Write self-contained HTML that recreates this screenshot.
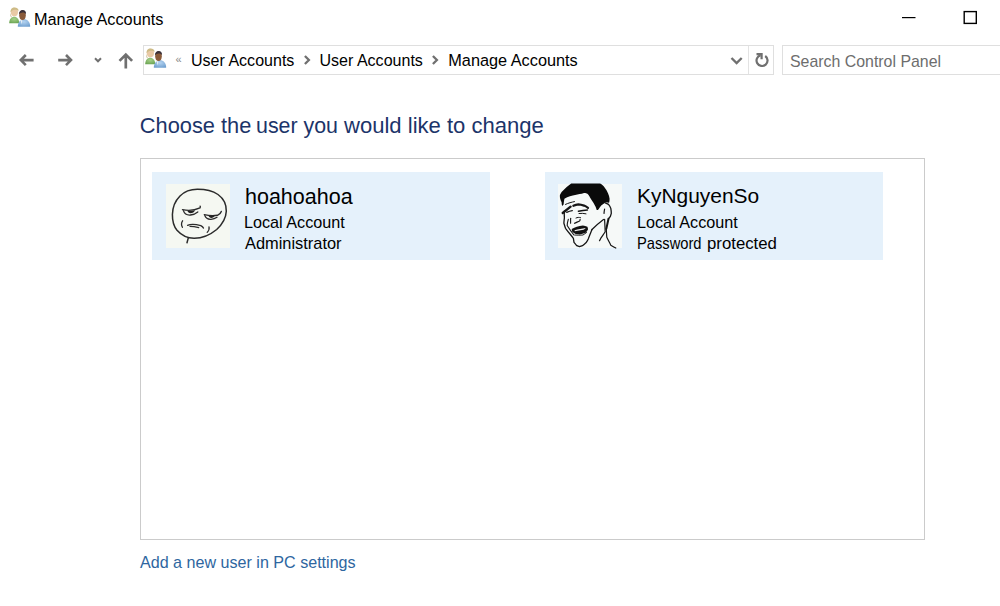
<!DOCTYPE html>
<html><head><meta charset="utf-8">
<style>
html,body{margin:0;padding:0;background:#fff;width:1000px;height:606px;overflow:hidden;position:relative;font-family:"Liberation Sans",sans-serif;}
.t{position:absolute;white-space:nowrap;line-height:1;transform-origin:0 0;}
.box{position:absolute;box-sizing:border-box;}
svg{position:absolute;overflow:visible;}
</style></head><body>

<!-- title bar -->
<svg style="left:6px;top:4px" width="26" height="26" viewBox="0 0 26 26">
  <defs>
    <radialGradient id="g1" cx="0.5" cy="0.35" r="0.7"><stop offset="0" stop-color="#a6d08a"/><stop offset="1" stop-color="#6ba452"/></radialGradient>
    <radialGradient id="b1" cx="0.5" cy="0.35" r="0.7"><stop offset="0" stop-color="#b4d3f0"/><stop offset="1" stop-color="#6f9fcf"/></radialGradient>
  </defs>
  <path d="M3.2 19.2 C3.2 15.2 5.5 12.8 8.2 12.8 C10.9 12.8 13.2 15 13.2 19.2 Z" fill="url(#g1)"/>
  <ellipse cx="8.4" cy="8" rx="3.6" ry="4.2" fill="#e9c9a5"/>
  <path d="M4.6 8.6 C4.3 5 6 3.4 8.5 3.4 C11 3.4 12.8 4.8 12.6 7 C11.5 5.8 10 5.6 8.5 5.8 C6.5 6 5.5 7 4.6 8.6Z" fill="#cdbb86"/>
  <path d="M4.8 9 C4.8 11 5.2 12.5 6 13.2 L5 13.3 C4.3 12 4.2 10.5 4.8 9Z" fill="#bfae80"/>
  <path d="M11.8 22.7 C11.8 18 14.6 15.2 18 15.2 C21.4 15.2 24.2 17.8 24.2 22.7 Z" fill="url(#b1)"/>
  <path d="M14.6 15.8 L15.6 20.5 L16.4 16.5Z" fill="#e8eef5"/>
  <ellipse cx="16.5" cy="11.3" rx="3.3" ry="4.7" fill="#8a5b3a"/>
  <path d="M13 10.5 C12.8 7.5 14.5 6 16.6 6 C18.8 6 20.2 7.3 20 10.2 C19.3 8.8 18 8.3 16.6 8.4 C15 8.5 13.8 9.2 13 10.5Z" fill="#3b3139"/>
</svg>
<div class="t" style="left:34px;top:10.6px;font-size:16.3px;color:#000">Manage Accounts</div>

<!-- address bar -->
<div class="box" style="left:143px;top:45px;width:631px;height:30px;border:1px solid #dfdfdf"></div>
<div class="box" style="left:748px;top:46px;width:1px;height:28px;background:#e3e3e3"></div>
<svg style="left:142px;top:45px" width="26" height="26" viewBox="0 0 26 26">
  <defs>
    <radialGradient id="g2" cx="0.5" cy="0.35" r="0.7"><stop offset="0" stop-color="#a6d08a"/><stop offset="1" stop-color="#6ba452"/></radialGradient>
    <radialGradient id="b2" cx="0.5" cy="0.35" r="0.7"><stop offset="0" stop-color="#b4d3f0"/><stop offset="1" stop-color="#6f9fcf"/></radialGradient>
  </defs>
  <path d="M3.2 19.2 C3.2 15.2 5.5 12.8 8.2 12.8 C10.9 12.8 13.2 15 13.2 19.2 Z" fill="url(#g2)"/>
  <ellipse cx="8.4" cy="8" rx="3.6" ry="4.2" fill="#e9c9a5"/>
  <path d="M4.6 8.6 C4.3 5 6 3.4 8.5 3.4 C11 3.4 12.8 4.8 12.6 7 C11.5 5.8 10 5.6 8.5 5.8 C6.5 6 5.5 7 4.6 8.6Z" fill="#cdbb86"/>
  <path d="M4.8 9 C4.8 11 5.2 12.5 6 13.2 L5 13.3 C4.3 12 4.2 10.5 4.8 9Z" fill="#bfae80"/>
  <path d="M11.8 22.7 C11.8 18 14.6 15.2 18 15.2 C21.4 15.2 24.2 17.8 24.2 22.7 Z" fill="url(#b2)"/>
  <path d="M14.6 15.8 L15.6 20.5 L16.4 16.5Z" fill="#e8eef5"/>
  <ellipse cx="16.5" cy="11.3" rx="3.3" ry="4.7" fill="#8a5b3a"/>
  <path d="M13 10.5 C12.8 7.5 14.5 6 16.6 6 C18.8 6 20.2 7.3 20 10.2 C19.3 8.8 18 8.3 16.6 8.4 C15 8.5 13.8 9.2 13 10.5Z" fill="#3b3139"/>
</svg>
<div class="t" style="left:175.5px;top:53.5px;font-size:11px;color:#888">«</div>
<div class="t" style="left:191px;top:51.6px;font-size:16.05px;color:#000">User Accounts</div>
<div class="t" style="left:319.5px;top:51.6px;font-size:16.05px;color:#000">User Accounts</div>
<div class="t" style="left:448.3px;top:51.6px;font-size:16.3px;color:#000">Manage Accounts</div>
<div class="box" style="left:782px;top:45px;width:230px;height:30px;border:1px solid #dfdfdf"></div>
<div class="t" style="left:790px;top:53.5px;font-size:15.9px;color:#6d6d6d">Search Control Panel</div>

<!-- heading -->
<div class="t" style="left:139.8px;top:115px;font-size:21.8px;color:#1c3469">Choose the</div><div class="t" style="left:256.2px;top:115px;font-size:21.8px;color:#1c3469;transform:scaleX(0.98);transform-origin:0 0">user you</div><div class="t" style="left:344.2px;top:115px;font-size:21.8px;color:#1c3469;transform:scaleX(1.012);transform-origin:0 0">would like to change</div>

<!-- panel -->
<div class="box" style="left:140px;top:158px;width:785px;height:382px;border:1px solid #cbcbcb"></div>

<!-- card 1 -->
<div class="box" style="left:152px;top:172px;width:338px;height:88px;background:#e5f1fb"></div>
<svg style="left:164px;top:182px" width="68" height="68" viewBox="0 0 68 68">
  <rect x="2" y="2" width="64" height="64" fill="#f5f8f2"/>
  <g fill="none" stroke="#2b2b2b" stroke-width="1.5" stroke-linecap="round">
    <path d="M33.7 7.3 C26 7.2 20.5 9.5 16 14 C11.5 18.5 8.6 25 8.4 32.5 C8.3 39 9.5 44 13 48.3 C17 52.8 23 56.3 30 56.3 C38 56.4 46 53 52.7 47.5 C58.5 42 62 36 62.3 29.2 C62.5 22 59.5 16.5 54 12.5 C48 8.5 41 7.3 33.7 7.3 Z"/>
    <path d="M24.3 55.9 L23 60.8"/>
    <path d="M18.5 27.6 C24 29 30 28.6 36 25.9 C36.3 25.3 36.4 24.7 36.2 24.2" stroke-width="1.4"/>
    <path d="M19.4 28.6 C20.5 32 23 33.3 26.5 33 C29.5 32.7 32 31.5 33.8 30" stroke-width="1.3"/>
    <path d="M40.3 32.6 C45 33.8 50 33.8 53.5 33.3 C55.5 32.5 56.8 31 57.3 29.5" stroke-width="1.4"/>
    <path d="M40.8 33.6 C41.8 36.3 44 37.5 47 37.3 C49.5 37.1 51.5 36.3 53 35.3" stroke-width="1.3"/>
    <path d="M18.6 38.8 C17.4 40.5 17.2 43 18.4 45.3" stroke-width="1.3"/>
    <path d="M23.6 43.3 C27 41.8 32 42.3 36.8 43.6 C38 44.2 39 45 39.4 46" stroke-width="1.4"/>
    <path d="M26 44.4 C29 44.5 32 45 34.8 45.6" stroke-width="1.1"/>
    <path d="M45 45 C45.5 47 44.6 49 43.2 50.4" stroke-width="1.3"/>
  </g>
  <path d="M23.5 29 C26 29.3 29 29 31 28.3 C30.5 30.3 28.5 31.3 26.5 31.3 C25 31.2 24 30.3 23.5 29Z" fill="#222"/>
  <path d="M44.5 33.7 C47 34 49.5 33.9 51 33.6 C50.3 35.2 48.8 35.9 47.3 35.9 C46 35.8 45 35 44.5 33.7Z" fill="#222"/>
</svg>
<div class="t" style="left:245px;top:186.5px;font-size:21.5px;color:#000">hoahoahoa</div>
<div class="t" style="left:244px;top:213.5px;font-size:16.2px;color:#000">Local Account</div>
<div class="t" style="left:245px;top:235px;font-size:16.4px;color:#000">Administrator</div>

<!-- card 2 -->
<div class="box" style="left:545px;top:172px;width:338px;height:88px;background:#e5f1fb"></div>
<svg style="left:556px;top:182px" width="68" height="68" viewBox="0 0 68 68">
  <rect x="2" y="2" width="64" height="64" fill="#f6f9f8"/>
  <path d="M15.2 1.5 L44.1 1.6 C46 2.5 47.5 4 48.6 5.6 C50 7.5 51.2 9.3 52 11.2 C52.8 13 53.4 15 53.6 16.8 C53.6 18.3 53.4 19.8 53.1 20.8 C52 20.6 50.8 20.3 49.7 20.2 C48 21.3 46.4 22.4 45.2 23.6 C44.2 25 43.2 26.4 42.4 27.5 C41.8 28 41.2 28.1 40.7 28 C40.3 26.8 40 25.8 39.6 24.7 C38.8 23.3 38.2 22 37.4 20.8 C36.3 19.3 35.2 17.6 34 15.5 C33 13.5 32 12 31.4 11.8 C30.5 11 29 10.8 28 10.9 C26.5 11.3 25 11.8 23.6 12.1 C21.5 12.6 19 13 16.8 13.5 C14.8 14 13 14.5 11.2 15.2 C10.2 15.8 9.2 16.3 8.4 16.8 C8 18.5 7.8 20.5 7.6 22.5 C7.2 22.8 6.6 23.5 6.2 24.1 C5.8 22.8 5.6 21.5 5.6 20.2 C5 19 4.5 17.8 4.2 16.8 C3.9 15.5 3.8 14.2 3.9 12.9 C4.4 12 5 11 5.6 10.1 C7.2 8.5 9 6.7 10.7 5 C12.2 3.7 13.7 2.5 15.2 1.5Z" fill="#0a0a0a"/>
  <g fill="none" stroke="#151515" stroke-linecap="round" stroke-linejoin="round">
    <path d="M6.7 31 L14.6 24.7" stroke-width="2.3"/>
    <path d="M17.4 23.8 C19 23 20.7 22.5 22.4 22.4 C24.3 22.5 26.2 23 28 23.6 C29.5 24.2 30.8 25 32 25.8" stroke-width="2.2"/>
    <path d="M9.5 22.4 C12.5 21 15.5 20.2 18.5 19.6" stroke-width="1"/>
    <path d="M10.7 30.3 C12.5 29.5 14.4 28.9 16.3 28.6" stroke-width="1.3"/>
    <path d="M22.4 29.2 C25.5 28.6 28.5 28.2 31.4 28" stroke-width="1.5"/>
    <path d="M23 31.5 C25.5 31.2 28 31.3 30 31.8" stroke-width="1"/>
    <path d="M8.4 29 C8.2 31.5 8.2 33.5 8.4 35.7 C8.2 37.7 7.9 39.5 7.9 41.3 C8.4 43 8.9 44.7 9.5 46.3 C11 48.3 12.5 50.2 14 52 C15.2 53.5 16.4 55 17.4 56.4 C17.6 57.8 17.8 59.1 18 60.4 C19 61.5 19.9 62.7 20.8 63.7 C21.7 64.1 22.7 64.4 23.6 64.6 C24.5 64.3 25.5 64 26.4 63.7 C27.8 62.7 29.1 61.5 30.3 60.4 C31.2 59.1 31.9 57.7 32.5 56.4 C33.5 53.5 34.8 50.5 36 47.5" stroke-width="1.3"/>
    <path d="M12.3 37.4 C11.7 39.4 11.2 41.4 11.2 43.5 C12.2 45.2 13.4 46.9 14.6 48.6 C15.7 50 16.8 51.5 18 53" stroke-width="1.1"/>
    <path d="M14.6 36.2 C14.6 38 14.6 39.6 14.6 41.3" stroke-width="1.1"/>
    <path d="M18.5 41.3 C20.2 40.5 21.9 39.8 23.6 39 C24 38.4 24.1 37.9 24.1 37.4" stroke-width="1.2"/>
    <path d="M20 36 C21.5 35.3 23 35.2 24.5 35.6" stroke-width="1"/>
    <path d="M36 47.5 C39.5 44 43.5 40.5 47.5 37.5" stroke-width="1.2"/>
    <path d="M49.2 20.8 C50.3 21.3 51.5 21.8 52.5 22.4 C53.5 23.6 54.3 25 54.8 26.4 C55.1 28 55.3 29.7 55.3 31.4 C55 33.5 54.2 35.3 52.5 36.8" stroke-width="1.3"/>
    <path d="M48.6 27 C48.3 28.5 48.1 30 48 31.4" stroke-width="1.2"/>
    <path d="M48.6 37.4 C48.8 41.5 49 45.5 49.2 49.7 C47.8 51.9 46.2 54.1 44.7 56.4 C44.3 57.2 43.9 58 43.5 58.7" stroke-width="1.2"/>
    <path d="M52.5 36.8 C51.8 40.2 51 43.6 50.3 46.9" stroke-width="2"/>
    <path d="M50.3 46.9 C50.4 49.8 50.6 52.5 50.8 55.3 C52.1 58 53.5 60.6 54.8 63.2 C56.5 64.2 58.2 65.2 59.8 66" stroke-width="1.2"/>
  </g>
  <path d="M15.7 46.9 C17.4 46.2 19.1 45.4 20.8 44.7 C22.8 44.2 24.9 43.8 26.9 43.5 C28.5 43.9 30 44.3 31.4 44.7 C31.8 45.6 32 46.5 32 47.5 C31.3 48.6 30.5 49.7 29.7 50.8 C27.7 51.4 25.6 52 23.6 52.5 C22.3 52.4 20.9 52.2 19.6 52 C18.5 51.3 17.4 50.5 16.3 49.7 C16 48.8 15.8 47.8 15.7 46.9Z" fill="#111"/>
  <path d="M18.5 48.3 C22 47.5 26 46.6 29.7 46.1 C29.3 46.9 28.5 47.5 27.5 47.8 C24.5 48.4 21.5 49 18.8 49.3Z" fill="#eeeeee"/>
  <path d="M18.5 53 C21.3 53.3 24.2 53.3 27 53 C28.3 52.2 29.6 51.3 30.9 50.3" fill="none" stroke="#222" stroke-width="1"/>
</svg>
<div class="t" style="left:637px;top:186px;font-size:20.95px;color:#000">KyNguyenSo</div>
<div class="t" style="left:637px;top:213.5px;font-size:16.2px;color:#000">Local Account</div>
<div class="t" style="left:637px;top:236px;font-size:15.9px;color:#000;transform:scaleX(0.925);transform-origin:0 0">Password</div><div class="t" style="left:706.8px;top:236px;font-size:15.9px;color:#000;transform:scaleX(1.055)">protected</div>

<!-- link -->
<div class="t" style="left:140px;top:554px;font-size:16.1px;color:#2e66a0">Add a new user in PC settings</div>

<!-- icon overlay -->
<svg style="left:0;top:0" width="1000" height="606" viewBox="0 0 1000 606">
  <g fill="none" stroke="#000">
    <path d="M902 17.6 H915.5" stroke-width="1.2"/>
    <rect x="964.2" y="11.6" width="12.1" height="11.8" stroke-width="1.4"/>
  </g>
  <g fill="none" stroke="#707070" stroke-width="2.6" stroke-linejoin="miter">
    <path d="M33.6 60.1 H20.8 M25.8 55 L20.8 60.1 L25.8 65.2"/>
    <path d="M58.2 60.1 H71 M66 55 L71 60.1 L66 65.2"/>
    <path d="M125.8 68.6 V54.6 M119.5 60.9 L125.8 54.6 L132.1 60.9" stroke-width="2.7"/>
    <path d="M95 58.3 L98 61.3 L101 58.3" stroke-width="2"/>
    <path d="M304.9 56 L308.9 60 L304.9 64" stroke-width="2.3"/>
    <path d="M432.9 56 L436.9 60 L432.9 64" stroke-width="2.3"/>
    <path d="M731.5 58 L736.6 63 L741.7 58" stroke-width="2.4"/>
    <path d="M760.6 55.2 A5.5 5.5 0 1 0 765.2 56" stroke-width="2.2"/>
    <path d="M756.5 54.2 H761.6 V59.2" stroke-width="2.2"/>
  </g>
</svg>
</body></html>
